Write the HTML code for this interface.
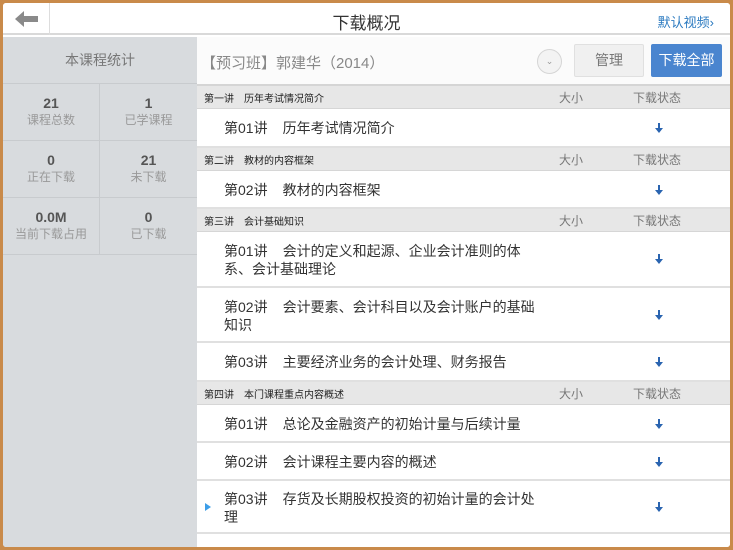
<!DOCTYPE html>
<html><head><meta charset="utf-8"><style>
*{margin:0;padding:0;box-sizing:border-box}
body{width:733px;height:550px;background:#c98a4a;font-family:"Liberation Sans","Noto Sans CJK SC",sans-serif;position:relative;overflow:hidden}
.frame{position:absolute;left:3px;top:3px;width:727px;height:544px;background:#fff;border-radius:3px;overflow:hidden}
.hdr{position:absolute;left:0;top:0;width:727px;height:32px;background:#fff;border-bottom:2px solid #d9d9d9}
.back{position:absolute;left:0;top:0;width:47px;height:32px;border-right:1px solid #ddd}
.title{position:absolute;left:0;width:727px;top:6px;text-align:center;font-size:17px;color:#333}
.dv{position:absolute;right:16px;top:9px;font-size:13px;color:#2b7ac0}
.left{position:absolute;left:0;top:34px;width:194px;height:510px;background:#d8dbde}
.lt{height:47px;line-height:47px;text-align:center;color:#777;font-size:14px;border-bottom:1px solid #c8cbce}
.grid{display:flex;flex-wrap:wrap}
.cell{width:97px;height:57px;border-bottom:1px solid #c8cbce;text-align:center;padding-top:11px}
.cell:nth-child(odd){border-right:1px solid #c8cbce}
.cell b{display:block;font-size:14px;color:#555;line-height:17px}
.cell span{display:block;font-size:12px;color:#999;line-height:16px}
.right{position:absolute;left:194px;top:34px;width:533px;height:510px;background:#fff}
.bar{height:49px;border-bottom:2px solid #d5d5d5;position:relative;background:#fbfbfb}
.ct{position:absolute;left:4px;top:15px;font-size:15px;color:#888}
.dd{position:absolute;left:340px;top:12px;width:25px;height:25px;border-radius:50%;border:1px solid #d5d5d5;background:#f3f3f3;color:#999;font-size:9px;text-align:center;line-height:23px}
.mg{position:absolute;left:377px;top:7px;width:70px;height:33px;background:#f0f0f0;border:1px solid #e0e0e0;color:#777;font-size:14px;text-align:center;line-height:31px;border-radius:2px}
.da{position:absolute;left:454px;top:7px;width:71px;height:33px;background:#4a85cf;color:#fff;font-size:14px;text-align:center;line-height:33px;border-radius:2px}
.sh{height:23px;background:#e7e7e7;position:relative;font-size:10px;color:#222;border-bottom:1px solid #d6d6d6}
.sh .n{position:absolute;left:7px;top:4px}
.sh .s{position:absolute;left:362px;top:3px;font-size:12px;color:#777}
.sh .st{position:absolute;left:436px;top:3px;font-size:12px;color:#777}
.it{position:relative;border-bottom:2px solid #e0e0e0;font-size:14px;color:#333}
.it .t{position:absolute;left:27px;width:322px;line-height:18px}
.it .t i{font-style:normal;margin-right:15px}
.ar{position:absolute;left:458px;width:8px;height:10px}
.tri{position:absolute;left:8px;width:0;height:0;border-left:6px solid #3d9ee8;border-top:4px solid transparent;border-bottom:4px solid transparent}
</style></head><body>
<div class="frame">
<div class="hdr"><div class="back"><svg width="47" height="32"><path d="M12 16 L21 8 L21 13 L35 13 L35 19 L21 19 L21 24 Z" fill="#8a8a8a"/></svg></div>
<div class="title">下载概况</div><div class="dv">默认视频›</div></div>
<div class="left"><div class="lt">本课程统计</div>
<div class="grid">
<div class="cell"><b>21</b><span>课程总数</span></div><div class="cell"><b>1</b><span>已学课程</span></div>
<div class="cell"><b>0</b><span>正在下载</span></div><div class="cell"><b>21</b><span>未下载</span></div>
<div class="cell"><b>0.0M</b><span>当前下载占用</span></div><div class="cell"><b>0</b><span>已下载</span></div>
</div></div>
<div class="right">
<div class="bar"><div class="ct">【预习班】郭建华（2014）</div><div class="dd">⌄</div><div class="mg">管理</div><div class="da">下载全部</div></div>
<div class="sh"><span class="n">第一讲　历年考试情况简介</span><span class="s">大小</span><span class="st">下载状态</span></div>
<div class="it" style="height:39px"><div class="t" style="top:10px"><i>第01讲</i>历年考试情况简介</div><svg class="ar" style="top:14px" viewBox="0 0 8 10"><path d="M3 0h2v5h3L4 10 0 5h3z" fill="#2a64b0"/></svg></div>
<div class="sh"><span class="n">第二讲　教材的内容框架</span><span class="s">大小</span><span class="st">下载状态</span></div>
<div class="it" style="height:38px"><div class="t" style="top:10px"><i>第02讲</i>教材的内容框架</div><svg class="ar" style="top:14px" viewBox="0 0 8 10"><path d="M3 0h2v5h3L4 10 0 5h3z" fill="#2a64b0"/></svg></div>
<div class="sh"><span class="n">第三讲　会计基础知识</span><span class="s">大小</span><span class="st">下载状态</span></div>
<div class="it" style="height:56px"><div class="t" style="top:10px"><i>第01讲</i>会计的定义和起源、企业会计准则的体系、会计基础理论</div><svg class="ar" style="top:22px" viewBox="0 0 8 10"><path d="M3 0h2v5h3L4 10 0 5h3z" fill="#2a64b0"/></svg></div>
<div class="it" style="height:55px"><div class="t" style="top:10px"><i>第02讲</i>会计要素、会计科目以及会计账户的基础知识</div><svg class="ar" style="top:22px" viewBox="0 0 8 10"><path d="M3 0h2v5h3L4 10 0 5h3z" fill="#2a64b0"/></svg></div>
<div class="it" style="height:39px"><div class="t" style="top:10px"><i>第03讲</i>主要经济业务的会计处理、财务报告</div><svg class="ar" style="top:14px" viewBox="0 0 8 10"><path d="M3 0h2v5h3L4 10 0 5h3z" fill="#2a64b0"/></svg></div>
<div class="sh"><span class="n">第四讲　本门课程重点内容概述</span><span class="s">大小</span><span class="st">下载状态</span></div>
<div class="it" style="height:38px"><div class="t" style="top:10px"><i>第01讲</i>总论及金融资产的初始计量与后续计量</div><svg class="ar" style="top:14px" viewBox="0 0 8 10"><path d="M3 0h2v5h3L4 10 0 5h3z" fill="#2a64b0"/></svg></div>
<div class="it" style="height:38px"><div class="t" style="top:10px"><i>第02讲</i>会计课程主要内容的概述</div><svg class="ar" style="top:14px" viewBox="0 0 8 10"><path d="M3 0h2v5h3L4 10 0 5h3z" fill="#2a64b0"/></svg></div>
<div class="it" style="height:53px"><div class="tri" style="top:22px"></div><div class="t" style="top:9px"><i>第03讲</i>存货及长期股权投资的初始计量的会计处理</div><svg class="ar" style="top:21px" viewBox="0 0 8 10"><path d="M3 0h2v5h3L4 10 0 5h3z" fill="#2a64b0"/></svg></div>
</div>
</div>
</body></html>
